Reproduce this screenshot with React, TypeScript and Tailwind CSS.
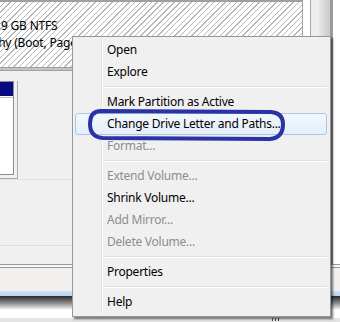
import React from "react";

type Item = { label: string; disabled?: boolean; hl?: boolean } | "sep";

const items: Item[] = [
  { label: "Open" },
  { label: "Explore" },
  "sep",
  { label: "Mark Partition as Active" },
  { label: "Change Drive Letter and Paths...", hl: true },
  { label: "Format...", disabled: true },
  "sep",
  { label: "Extend Volume...", disabled: true },
  { label: "Shrink Volume..." },
  { label: "Add Mirror...", disabled: true },
  { label: "Delete Volume...", disabled: true },
  "sep",
  { label: "Properties" },
  "sep",
  { label: "Help" },
];

export default function App() {
  return (
    <div className="relative w-[340px] h-[322px] overflow-hidden bg-[#f0f0f0] font-['Noto_Sans',sans-serif] text-[12px] text-black">
      {/* background window */}
      <div className="flex flex-col w-full h-full">
        <div className="flex h-[264px]">
          <div className="flex flex-col w-[303px]">
            <div className="h-[67px] border-t-2 border-r border-[#a0a0a0] bg-[repeating-linear-gradient(135deg,#ffffff_0px,#ffffff_3px,#b8b8b8_3px,#b8b8b8_4px)] pt-[15px] leading-[17px] whitespace-nowrap">
              <div className="w-[72px] overflow-hidden pl-[1px] tracking-[-0.2px]">9 GB NTFS</div>
              <div className="w-[72px] overflow-hidden tracking-[-0.2px]">
                <div className="-ml-[6px]">thy (Boot, Page</div>
              </div>
            </div>
            <div className="h-[4px] bg-[#c4c4c4] border-t border-b border-[#a0a0a0]" />
            <div className="flex flex-col flex-1">
              <div className="flex h-[108px] pt-[10px]">
                <div className="w-[18px] border-r border-b border-[#a8a8a8] pr-[3px] pb-[3px]">
                  <div className="h-full border-t border-r border-b border-[#8c8c8c] bg-white flex flex-col">
                    <div className="h-[14px] bg-[#0a0a82]" />
                    <div className="h-[1px] bg-[#c0c0c0] mt-[1px]" />
                  </div>
                </div>
              </div>
              <div className="h-[66px] border-t border-[#e2e2e2]" />
              <div className="h-[1px] bg-[#dedede]" />
            </div>
          </div>
          <div className="flex w-[37px]">
            <div className="w-[7px] bg-white" />
            <div className="w-[1px] bg-[#a8a8a8]" />
            <div className="w-[8px] bg-[#eeeeee]" />
            <div className="w-[11px] bg-[linear-gradient(90deg,#e8e8e8,#c8c8c8)]" />
            <div className="w-[3px] bg-[#9a9a9a]" />
            <div className="flex-1 bg-white" />
          </div>
        </div>
        <div className="h-[1px] bg-[#9a9a9a]" />
        <div className="h-[2px] bg-[#f6f6f6]" />
        <div className="h-[1px] bg-[#9a9a9a]" />
        <div className="h-[23px] bg-[#f2f0ee]" />
        <div className="h-[5px] bg-[linear-gradient(180deg,#cfe4f7,#b3d3ee)]" />
        <div className="h-[14px] bg-[linear-gradient(180deg,#2a2a2a,#8a8a8a_50%,#ffffff)]" />
        <div className="h-[8px] bg-white" />
        <div className="flex-1 bg-[#e4e4e4] relative">
          <div className="absolute left-[272px] top-0 flex gap-[2px]">
            <div className="w-[1px] h-[3px] bg-[#555]" />
            <div className="w-[1px] h-[3px] bg-[#555]" />
            <div className="w-[1px] h-[3px] bg-[#555]" />
          </div>
        </div>
      </div>

      {/* context menu */}
      <div className="absolute left-[72px] top-[36px] w-[259px] h-[281px] border border-[#979797] bg-[#f0f0f0] shadow-[2px_2px_2px_rgba(0,0,0,0.55)] pt-[2px] tracking-[-0.25px]">
        <div className="absolute left-[28px] top-[2px] bottom-[2px] w-[1px] bg-[#e2e3e3]" />
        <div className="absolute left-[29px] top-[2px] bottom-[2px] w-[1px] bg-white" />
        <div className="relative flex flex-col">
          {items.map((it, i) =>
            it === "sep" ? (
              <div key={i} className="h-[8px] pl-[30px] pr-[3px] flex flex-col justify-center">
                <div className="h-[1px] bg-[#e0e0e0]" />
                <div className="h-[1px] bg-white" />
              </div>
            ) : (
              <div
                key={i}
                className={
                  it.hl
                    ? "h-[22px] mx-[2px] mr-[3px] pl-[31px] leading-[20px] border border-[#a8c8e4] rounded-[3px] bg-[linear-gradient(180deg,#f2f7fd,#e4eefa)]"
                    : "h-[22px] pl-[34px] leading-[22px]"
                }
              >
                <span className={it.disabled ? "text-[#8d8d8d]" : "text-black"}>{it.label}</span>
              </div>
            )
          )}
        </div>
      </div>

      {/* hand-drawn annotation */}
      <svg className="absolute left-0 top-0" width="340" height="322" viewBox="0 0 340 322">
        <path
          d="M 101 111 L 271 112 Q 283 113 283 124 Q 283 138 270 139 L 103 138 Q 90 137 90 124 Q 90 111 101 111 Z"
          fill="none"
          stroke="#2a33a6"
          strokeWidth="4"
        />
      </svg>
    </div>
  );
}
